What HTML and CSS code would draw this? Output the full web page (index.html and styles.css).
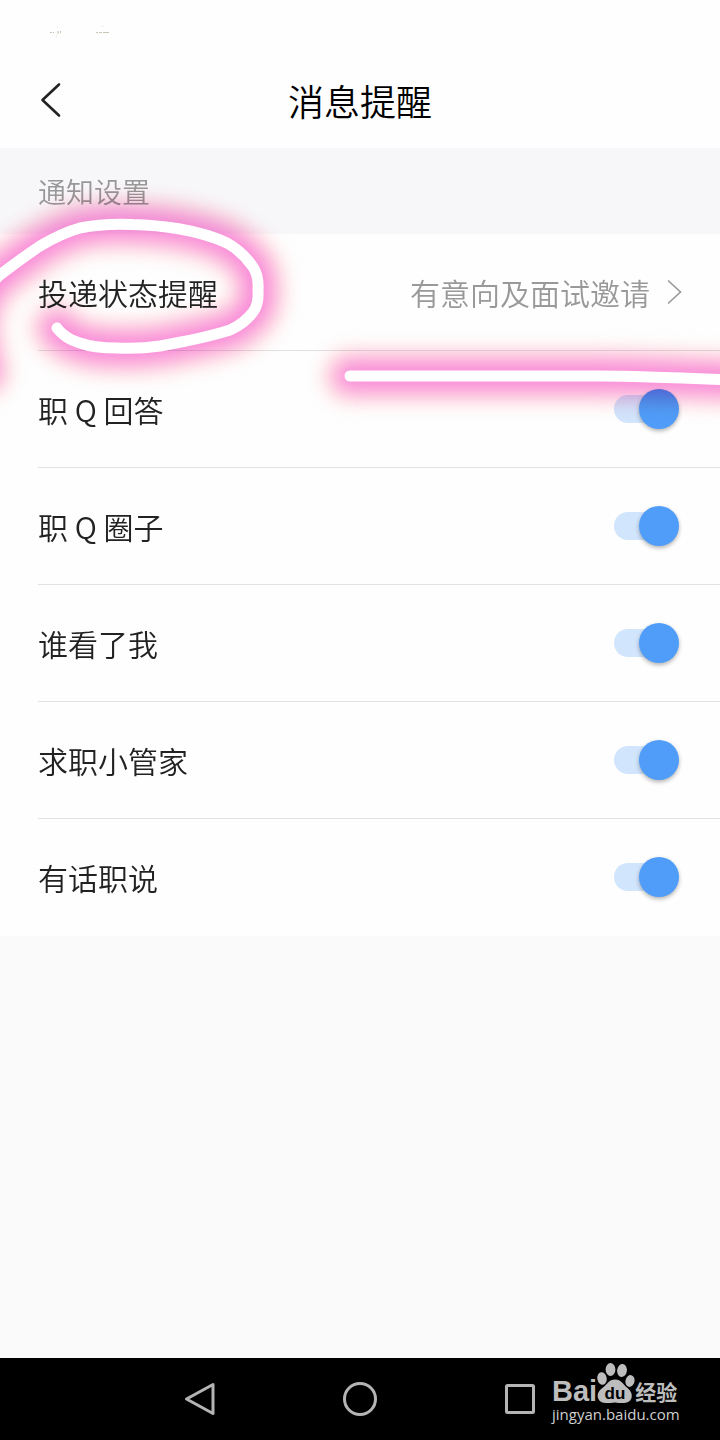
FILE: index.html
```
<!DOCTYPE html>
<html lang="zh-CN">
<head>
<meta charset="utf-8">
<meta name="viewport" content="width=device-width, initial-scale=1">
<title>消息提醒</title>
<link rel="stylesheet" href="styles.css">
</head>
<body>
<div class="screen">
  <header class="header">
    <svg class="status" viewBox="0 0 64 14" aria-hidden="true">
      <g fill="none" stroke="#b5ac98" stroke-width="1">
        <path d="M2 8.500h2M5 8.500h1M10 7v3M12.500 7v2" opacity=".7"/>
        <path d="M48 8.500h2M51 8.500h3M55 8.500h6" opacity=".7"/>
        <path d="M9 3h1M54 2h1M8 12h1" opacity=".4"/>
      </g>
    </svg>
    <div class="titlebar">
      <button class="back" type="button" aria-label="返回">
        <svg viewBox="0 0 24 36" aria-hidden="true"><path d="M19 2.500 2.500 18 19 33.500" fill="none" stroke="#222" stroke-width="2.600" stroke-linecap="round" stroke-linejoin="round"/></svg>
      </button>
      <h1 class="title">消息提醒</h1>
    </div>
  </header>

  <main class="content">
    <h2 class="section">通知设置</h2>
    <div class="list">
      <a class="row" href="#status">
        <span class="label">投递状态提醒</span>
        <span class="value">有意向及面试邀请</span>
        <svg class="chevron" viewBox="0 0 16 26" aria-hidden="true"><path d="M2 1.500 14.500 13 2 24.500" fill="none" stroke="#999" stroke-width="1.600"/></svg>
      </a>
      <div class="row"><label class="label" for="answer">职 Q 回答</label><input class="switch" id="answer" type="checkbox" role="switch" checked></div>
      <div class="row"><label class="label" for="circle">职 Q 圈子</label><input class="switch" id="circle" type="checkbox" role="switch" checked></div>
      <div class="row"><label class="label" for="viewed">谁看了我</label><input class="switch" id="viewed" type="checkbox" role="switch" checked></div>
      <div class="row"><label class="label" for="manager">求职小管家</label><input class="switch" id="manager" type="checkbox" role="switch" checked></div>
      <div class="row"><label class="label" for="talk">有话职说</label><input class="switch" id="talk" type="checkbox" role="switch" checked></div>
    </div>

    <svg class="marks glow" viewBox="0 148 720 300" aria-hidden="true">
      <defs>
        <filter id="wide" filterUnits="userSpaceOnUse" x="-100" y="100" width="920" height="400" color-interpolation-filters="sRGB"><feGaussianBlur stdDeviation="9"/></filter>
        <filter id="near" filterUnits="userSpaceOnUse" x="-100" y="100" width="920" height="400" color-interpolation-filters="sRGB"><feGaussianBlur stdDeviation="10"/></filter>
        <path id="loop" d="M-16 372C-24 345-34 305 0 275Q22 258 40 246Q62 233 80 228Q104 223 133 224.500Q156 225 180 229Q208 234 227 243Q243 252 253 267Q259 276 258 290Q259 304 253 312Q245 323 230 330Q205 338 160 346Q140 349 117 348Q94 348 80 343Q70 340 64 335Q59 331 57 328"/>
        <path id="line" d="M350 376H600Q640 376 730 380"/>
      </defs>
      <g fill="none" stroke-linecap="round" stroke-linejoin="round">
        <g stroke="#ffe2e2" stroke-width="56" filter="url(#wide)"><use href="#loop"/><use href="#line"/></g>
        <g stroke="#fa88da" stroke-width="30" filter="url(#near)"><use href="#loop"/><use href="#line"/></g>
      </g>
    </svg>
    <svg class="marks" viewBox="0 148 720 300" aria-hidden="true">
      <g fill="none" stroke="#fff" stroke-width="11" stroke-linecap="round" stroke-linejoin="round"><use href="#loop"/><use href="#line"/></g>
    </svg>
  </main>

  <nav class="navbar" aria-label="系统导航">
    <button class="key" type="button" aria-label="返回"><svg viewBox="0 0 36 36"><path d="M31 3.500V32.500L4.500 18Z"/></svg></button>
    <button class="key" type="button" aria-label="主页"><svg viewBox="0 0 36 36"><circle cx="18" cy="18" r="15.500"/></svg></button>
    <button class="key" type="button" aria-label="最近任务"><svg viewBox="0 0 36 36"><rect x="4.500" y="4.500" width="27" height="27" rx="1"/></svg></button>
    <div class="watermark">
      <div class="brand">
        <span class="bai">Bai</span>
        <svg class="paw" viewBox="0 0 38 42" aria-hidden="true">
          <g fill="#bdbdbd">
            <ellipse cx="5" cy="16.500" rx="4.700" ry="6.300" transform="rotate(-10 5 16.500)"/>
            <ellipse cx="13.500" cy="7.500" rx="4.900" ry="6.500"/>
            <ellipse cx="25" cy="8.500" rx="4.900" ry="6.500" transform="rotate(8 25 8.500)"/>
            <ellipse cx="33" cy="19" rx="4.500" ry="6" transform="rotate(12 33 19)"/>
            <path d="M18 17.500C12 17.500 10.500 22 6 25.500C1.500 29 0 32 1 36C3 42 9 41.500 18 40.500C26 41.500 32.500 42 34.500 36C35.500 32 34 29 30.500 26C25.500 22 24.500 17.500 18 17.500Z"/>
          </g>
          <text x="18" y="37" class="du" text-anchor="middle">du</text>
        </svg>
        <span class="jy">经验</span>
      </div>
      <div class="site">jingyan.baidu.com</div>
    </div>
  </nav>
</div>
</body>
</html>
```
FILE: styles.css
```
* { box-sizing: border-box; }

body {
  margin: 0;
  background: #fafafa;
  color: #222;
  font-family: "Noto Sans CJK SC", sans-serif;
  font-weight: 350;
}

button { padding: 0; border: 0; background: none; }

.screen {
  min-height: 100vh;
  display: flex;
  flex-direction: column;
}

.header { background: #fefefe; padding-top: 24px; }

.status { display: block; width: 64px; height: 14px; margin-left: 48px; }

.titlebar {
  display: grid;
  grid-template-columns: 64px 1fr 64px;
  align-items: center;
  height: 110px;
  padding-top: 14px;
}

.back { justify-self: end; width: 24px; height: 36px; }
.back svg { display: block; width: 24px; height: 36px; }

.title {
  margin: 0;
  color: #000;
  font-size: 36px;
  font-weight: 350;
  line-height: 48px;
  text-align: center;
}

.content { position: relative; isolation: isolate; overflow: hidden; }

.section {
  margin: 0;
  padding: 23px 38px;
  background: #f7f7fa;
  color: #999;
  font-size: 28px;
  font-weight: 350;
  line-height: 40px;
}

.list { background: #fefefe; padding-left: 38px; }

.row {
  display: flex;
  align-items: center;
  min-height: 117px;
  padding-right: 38px;
  border-bottom: 1px solid #e2e2e2;
  color: inherit;
  text-decoration: none;
}
.row:last-child { border-color: transparent; }

.label { flex: 1; font-size: 30px; line-height: 44px; }
.value { color: #999; font-size: 30px; line-height: 44px; }
.chevron { width: 16px; height: 26px; margin-left: 16px; }

.switch {
  appearance: none;
  display: grid;
  align-items: center;
  width: 68px;
  height: 40px;
  margin: 0;
}
.switch::before,
.switch::after { content: ""; grid-area: 1 / 1; }
.switch::before {
  width: 60px;
  height: 28px;
  border-radius: 14px;
  background: #d1e5fd;
}
.switch::after {
  width: 40px;
  height: 40px;
  margin-left: 25px;
  border-radius: 50%;
  background: #4f9df9;
  box-shadow: 0 2px 4px rgba(0, 0, 0, .3);
}

/* Hand-drawn highlight lying over the list */
.marks {
  position: absolute;
  top: 0;
  left: 0;
  width: 100%;
  pointer-events: none;
}
.glow { mix-blend-mode: multiply; }

.navbar {
  position: relative;
  display: flex;
  justify-content: center;
  align-items: center;
  gap: 124px;
  height: 82px;
  margin-top: auto;
  background: #000;
}

.key { width: 36px; height: 36px; }
.key svg {
  display: block;
  width: 36px;
  height: 36px;
  fill: none;
  stroke: #b4b4b4;
  stroke-width: 3;
  stroke-linejoin: round;
}

.watermark {
  position: absolute;
  right: 40px;
  top: 5px;
  width: 128px;
  color: #bdbdbd;
}
.brand { display: flex; align-items: flex-end; height: 41px; }
.bai { font: 700 29px/26px "Liberation Sans", sans-serif; }
.paw { flex: none; width: 38px; height: 42px; }
.du { font: 700 17px "Liberation Sans", sans-serif; fill: #000; }
.jy { font-size: 21px; font-weight: 700; line-height: 26px; white-space: nowrap; }
.site { margin-top: 1px; font: 400 15px/18px "Open Sans", sans-serif; color: #cfcfcf; }
```
